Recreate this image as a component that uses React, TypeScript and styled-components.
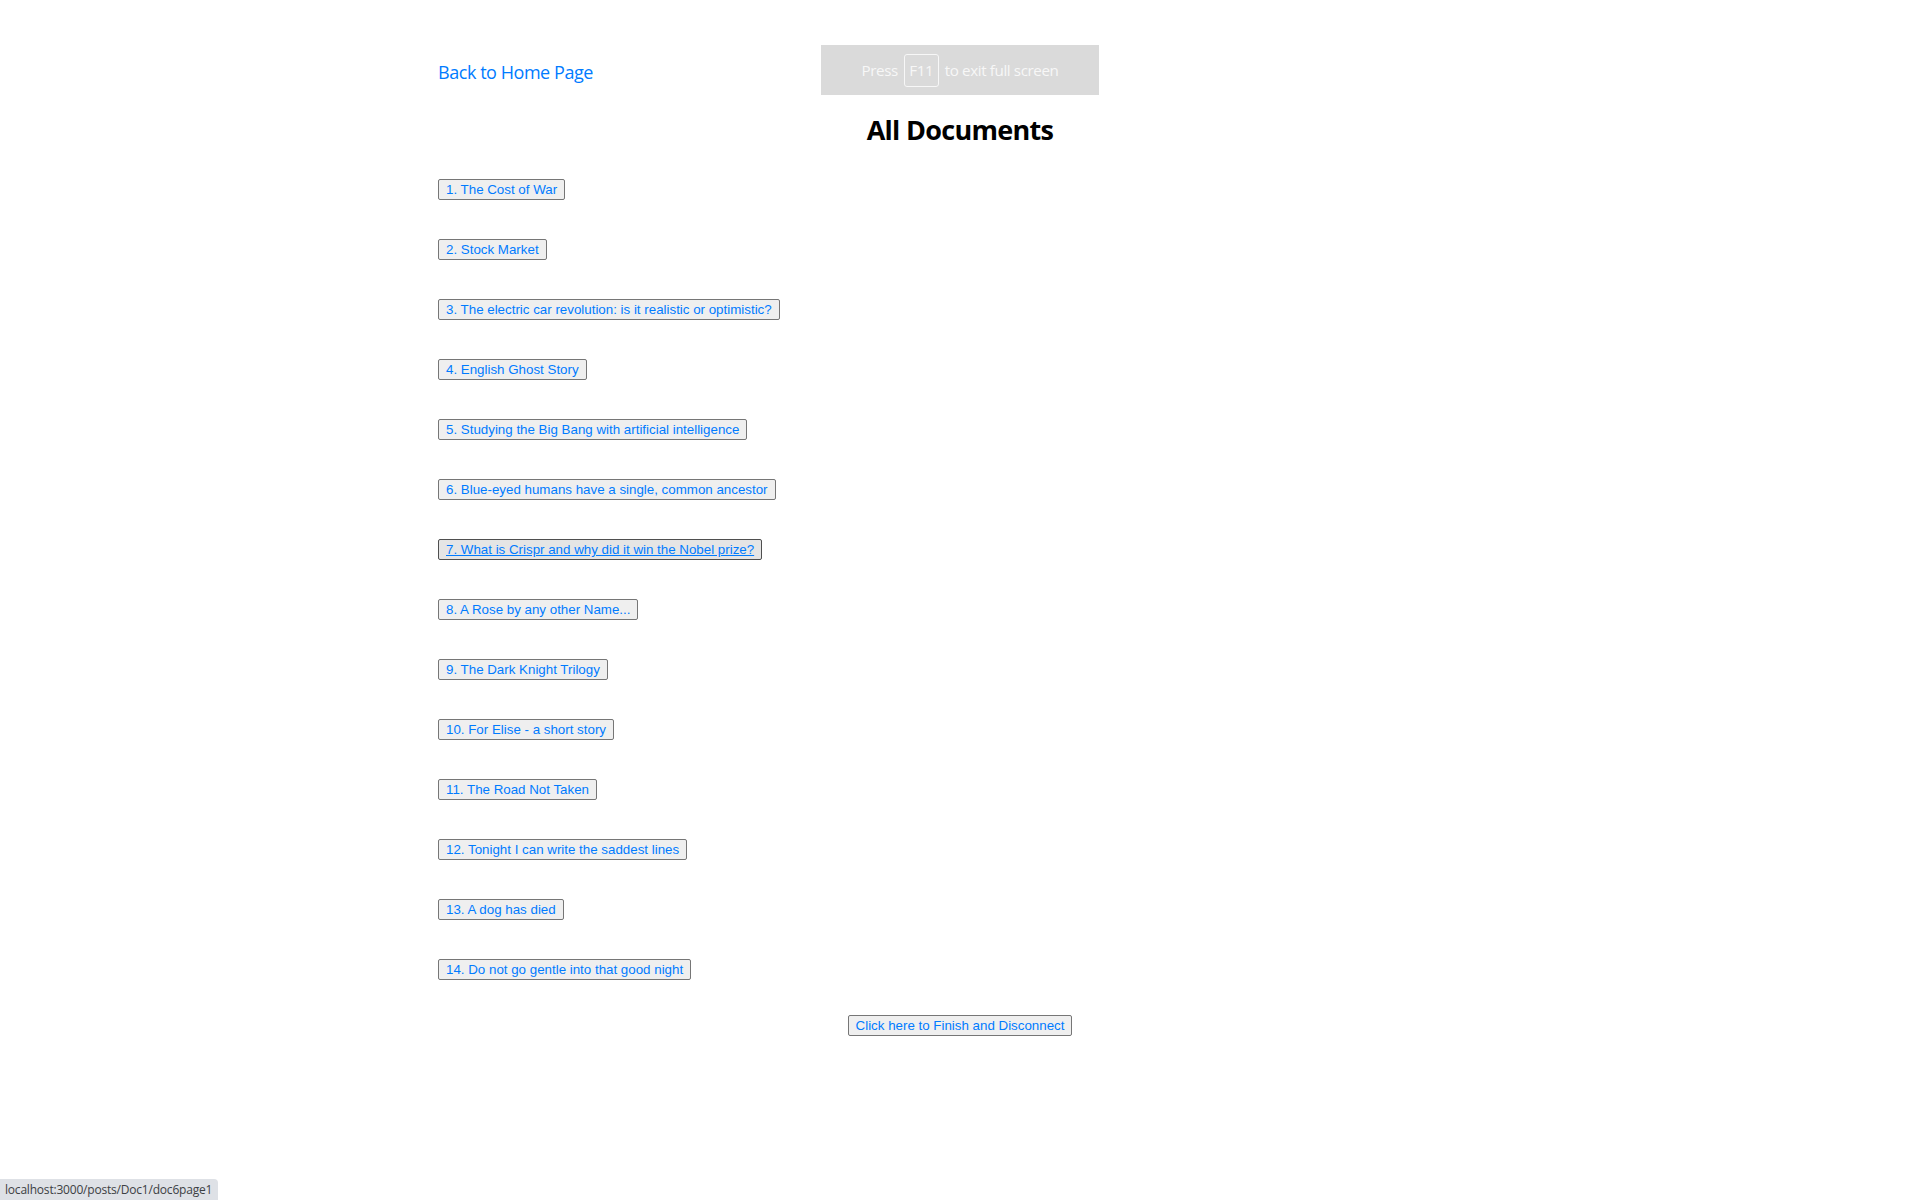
import React from "react";
import styled, { createGlobalStyle } from "styled-components";

const GlobalStyle = createGlobalStyle`
  html, body {
    margin: 0;
    padding: 0;
    background: #ffffff;
  }
  body {
    font-family: "Segoe UI", "Open Sans", "Noto Sans", sans-serif;
    color: #212529;
  }
`;

const Page = styled.div`
  width: 1044px;
  margin: 0 auto;
  padding-top: 59px;
  min-height: 1141px;
`;

const HomeLink = styled.a`
  display: inline-block;
  font-family: "Segoe UI", "Open Sans", sans-serif;
  font-size: 18px;
  line-height: 27px;
  letter-spacing: -0.45px;
  color: #007bff;
  text-decoration: none;
  cursor: pointer;
`;

const Heading = styled.h3`
  margin: 27px 0 0;
  text-align: center;
  font-family: "Segoe UI", "Open Sans", sans-serif;
  font-size: 27px;
  line-height: 33px;
  font-weight: 700;
  letter-spacing: -0.7px;
  color: #000000;
`;

const DocList = styled.div`
  display: flex;
  flex-direction: column;
  align-items: flex-start;
  gap: 39px;
  margin-top: 33px;
`;

const DocButton = styled.button<{ $hover?: boolean }>`
  font-family: "Liberation Sans", Arial, sans-serif;
  font-size: 13.333px;
  line-height: 15px;
  padding: 2px 7px 2px;
  border: 1px solid ${(p) => (p.$hover ? "#4f4f4f" : "#767676")};
  border-radius: 2px;
  background: ${(p) => (p.$hover ? "#e5e5e5" : "#efefef")};
  color: #007bff;
  text-decoration: ${(p) => (p.$hover ? "underline" : "none")};
  cursor: pointer;
  margin: 0;
`;

const FinishRow = styled.div`
  display: flex;
  justify-content: center;
  margin-top: 35px;
`;

const FullscreenHint = styled.div`
  position: fixed;
  top: 45px;
  left: 821px;
  width: 278px;
  height: 50px;
  background: #dadada;
  display: flex;
  align-items: center;
  justify-content: center;
  gap: 6px;
  font-family: "Segoe UI", "Open Sans", sans-serif;
  font-size: 15.2px;
  letter-spacing: -0.4px;
  color: #f7f7f7;
`;

const KeyCap = styled.span`
  display: inline-flex;
  align-items: center;
  justify-content: center;
  width: 35px;
  height: 33px;
  border: 1px solid #f7f7f7;
  border-radius: 3px;
  box-sizing: border-box;
`;

const StatusBubble = styled.div`
  position: fixed;
  left: 0;
  bottom: 0;
  height: 21px;
  padding: 0 6px 0 5px;
  display: flex;
  align-items: center;
  background: #dee1e6;
  border-top-right-radius: 4px;
  font-family: "Segoe UI", "Open Sans", sans-serif;
  font-size: 12px;
  letter-spacing: -0.2px;
  color: #3c4043;
`;

const docs = [
  "1. The Cost of War",
  "2. Stock Market",
  "3. The electric car revolution: is it realistic or optimistic?",
  "4. English Ghost Story",
  "5. Studying the Big Bang with artificial intelligence",
  "6. Blue-eyed humans have a single, common ancestor",
  "7. What is Crispr and why did it win the Nobel prize?",
  "8. A Rose by any other Name...",
  "9. The Dark Knight Trilogy",
  "10. For Elise - a short story",
  "11. The Road Not Taken",
  "12. Tonight I can write the saddest lines",
  "13. A dog has died",
  "14. Do not go gentle into that good night",
];

export default function App() {
  return (
    <>
      <GlobalStyle />
      <Page>
        <HomeLink>Back to Home Page</HomeLink>
        <Heading>All Documents</Heading>
        <DocList>
          {docs.map((d, i) => (
            <DocButton key={d} $hover={i === 6}>
              {d}
            </DocButton>
          ))}
        </DocList>
        <FinishRow>
          <DocButton>Click here to Finish and Disconnect</DocButton>
        </FinishRow>
      </Page>
      <FullscreenHint>
        <span>Press</span>
        <KeyCap>F11</KeyCap>
        <span>to exit full screen</span>
      </FullscreenHint>
      <StatusBubble>localhost:3000/posts/Doc1/doc6page1</StatusBubble>
    </>
  );
}
